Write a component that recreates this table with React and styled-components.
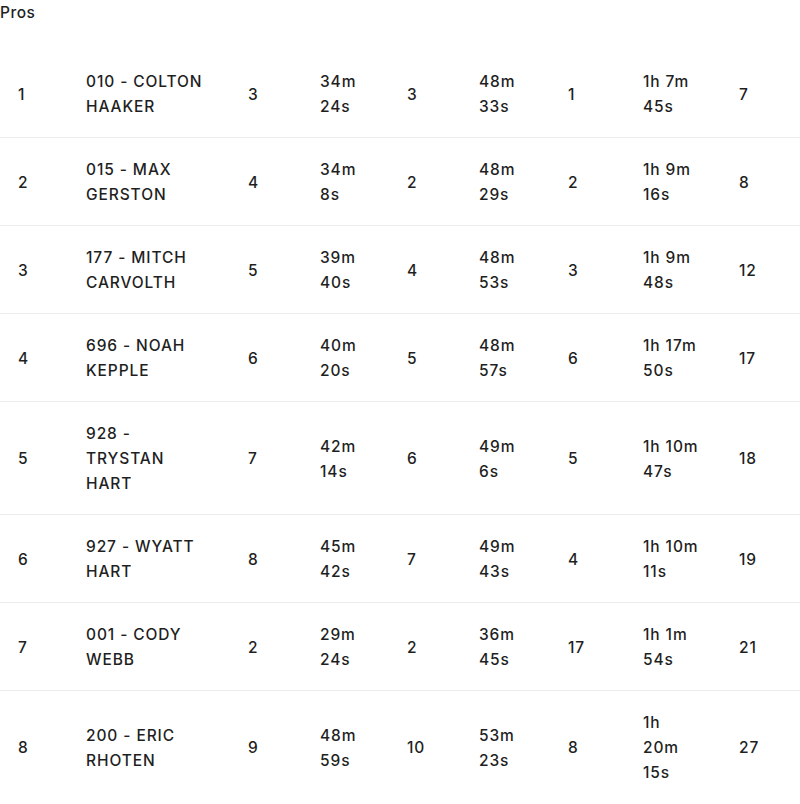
import styled, {createGlobalStyle} from "styled-components";

const GlobalStyle = createGlobalStyle`
  body {
    margin: 0;
    background: #fff;
    font-family: "Inter", "Open Sans", sans-serif;
    color: #1f1f1f;
  }
`

// line breaks follow the narrow columns of the original table
const results = [
  [1, "010 - COLTON\nHAAKER", 3, "34m\n24s", 3, "48m\n33s", 1, "1h 7m\n45s", 7],
  [2, "015 - MAX\nGERSTON", 4, "34m\n8s", 2, "48m\n29s", 2, "1h 9m\n16s", 8],
  [3, "177 - MITCH\nCARVOLTH", 5, "39m\n40s", 4, "48m\n53s", 3, "1h 9m\n48s", 12],
  [4, "696 - NOAH\nKEPPLE", 6, "40m\n20s", 5, "48m\n57s", 6, "1h 17m\n50s", 17],
  [5, "928 -\nTRYSTAN\nHART", 7, "42m\n14s", 6, "49m\n6s", 5, "1h 10m\n47s", 18],
  [6, "927 - WYATT\nHART", 8, "45m\n42s", 7, "49m\n43s", 4, "1h 10m\n11s", 19],
  [7, "001 - CODY\nWEBB", 2, "29m\n24s", 2, "36m\n45s", 17, "1h 1m\n54s", 21],
  [8, "200 - ERIC\nRHOTEN", 9, "48m\n59s", 10, "53m\n23s", 8, "1h\n20m\n15s", 27],
]

const widths = [68, 162, 72, 87, 72, 89, 75, 96, 79]

const App = () => {
  return (
    <>
      <GlobalStyle />
      <Table>
        <Caption>Pros</Caption>
        <colgroup>
          {widths.map((w, i) => <col key={i} style={{width: w}} />)}
        </colgroup>
        <tbody>
          {results.map((row) => (
            <Row key={row[0]}>
              {row.map((cell, i) => (
                <Cell key={i}>{cell}</Cell>
              ))}
            </Row>
          ))}
        </tbody>
      </Table>
    </>
  );
};

const Table = styled.table`
  width: 800px;
  table-layout: fixed;
  border-collapse: collapse;
  font-size: 15.5px;
  font-weight: 500;
  letter-spacing: 0.9px;
  line-height: 25px;
`

const Caption = styled.caption`
  text-align: left;
  line-height: 25px;
  padding-bottom: 25px;
  font-size: 15.5px;
  font-weight: 500;
  letter-spacing: 0.5px;
`

const Row = styled.tr`
  border-bottom: 1px solid #ececec;

  &:last-child {
    border-bottom: none;
  }
`

const Cell = styled.td`
  padding: 19px 18px 18px;
  vertical-align: middle;
  text-align: left;
  white-space: pre;
`

export default App;
